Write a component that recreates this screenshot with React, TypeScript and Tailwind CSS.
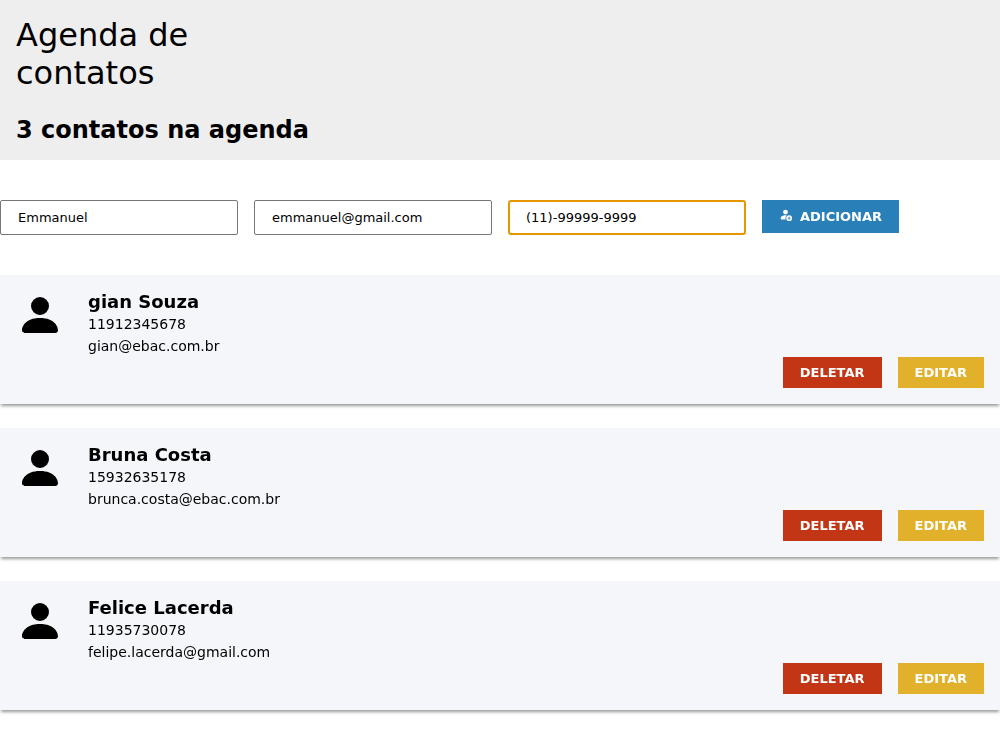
import { useState } from 'react'
import { BsFillPersonFill, BsPersonFillAdd } from 'react-icons/bs'

type Contact = { id: number; name: string; phone: string; email: string }

const initialContacts: Contact[] = [
  { id: 1, name: 'gian Souza', phone: '11912345678', email: 'gian@ebac.com.br' },
  { id: 2, name: 'Bruna Costa', phone: '15932635178', email: 'brunca.costa@ebac.com.br' },
  { id: 3, name: 'Felice Lacerda', phone: '11935730078', email: 'felipe.lacerda@gmail.com' },
]

const inputClass =
  'h-[35px] w-[238px] rounded-[2px] border border-[#767676] bg-white px-[17px] text-[13px] text-black outline-none focus:rounded-[3px] focus:border-2 focus:border-[#e59700] focus:px-4'

function ContactCard({ contact, onDelete }: { contact: Contact; onDelete: () => void }) {
  return (
    <li className="bg-[#f5f6fa] p-4 shadow-[0_3px_3px_-1px_rgba(0,0,0,0.4)]">
      <div className="flex gap-6">
        <BsFillPersonFill className="size-12 shrink-0" aria-hidden="true" />
        <div className="text-sm leading-[22px]">
          <h3 className="text-lg leading-[22px] font-bold">{contact.name}</h3>
          <p>{contact.phone}</p>
          <p>{contact.email}</p>
        </div>
      </div>
      <div className="flex justify-end gap-4">
        <button type="button" onClick={onDelete} className="h-[31px] bg-[#c23616] px-[17px] text-[13px] font-bold text-white">
          DELETAR
        </button>
        <button type="button" className="h-[31px] bg-[#e1b12c] px-[17px] text-[13px] font-bold text-white">
          EDITAR
        </button>
      </div>
    </li>
  )
}

export default function App() {
  const [contacts, setContacts] = useState(initialContacts)
  const [name, setName] = useState('Emmanuel')
  const [email, setEmail] = useState('emmanuel@gmail.com')
  const [phone, setPhone] = useState('(11)-99999-9999')

  return (
    <div className="font-['DejaVu_Sans',sans-serif] text-black">
      <header className="bg-[#eeeeee] p-4">
        <h1 className="max-w-60 text-[32px] leading-[38px]">Agenda de contatos</h1>
        <h2 className="mt-6 text-2xl leading-7 font-bold">{contacts.length} contatos na agenda</h2>
      </header>
      <main className="pb-6">
        <form
          className="my-10 flex items-start gap-4"
          onSubmit={(e) => {
            e.preventDefault()
            setContacts([...contacts, { id: Date.now(), name, phone, email }])
          }}
        >
          <input aria-label="Nome" className={inputClass} value={name} onChange={(e) => setName(e.target.value)} />
          <input aria-label="E-mail" type="email" className={inputClass} value={email} onChange={(e) => setEmail(e.target.value)} />
          <input aria-label="Telefone" type="tel" autoFocus className={inputClass} value={phone} onChange={(e) => setPhone(e.target.value)} />
          <button type="submit" className="flex items-baseline gap-2 bg-[#2980b9] px-[17px] py-2 text-[13px] leading-4 font-bold text-white">
            <BsPersonFillAdd className="size-[13px]" aria-hidden="true" />
            ADICIONAR
          </button>
        </form>
        <ul className="flex flex-col gap-6">
          {contacts.map((c) => (
            <ContactCard key={c.id} contact={c} onDelete={() => setContacts(contacts.filter((x) => x.id !== c.id))} />
          ))}
        </ul>
      </main>
    </div>
  )
}
